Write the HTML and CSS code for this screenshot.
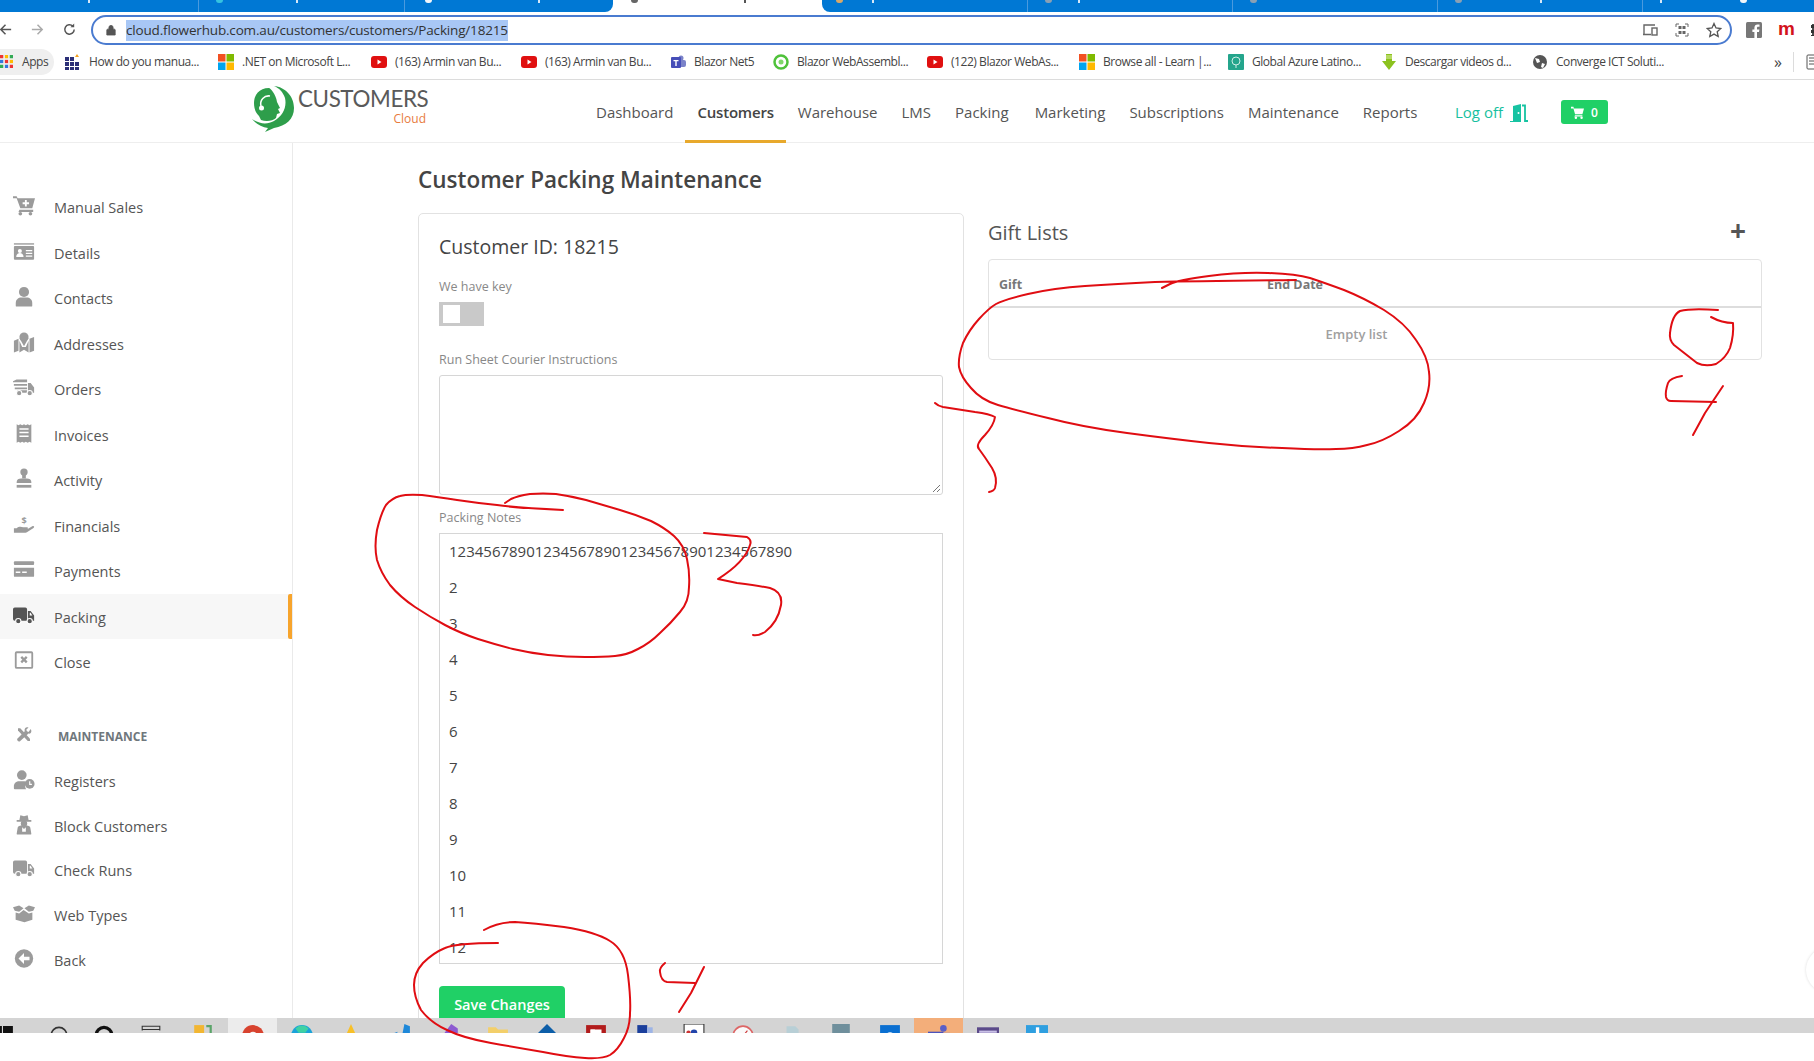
FILE: index.html
```html
<!DOCTYPE html>
<html lang="en">
<head>
<meta charset="utf-8">
<title>Customer Packing Maintenance</title>
<link rel="stylesheet" href="styles.css">
</head>
<body>
<div class="tabstrip">
  <div class="tab tab-first"><i class="tick"></i></div>
  <div class="tab tab-2"><i class="tabicon teal"></i><i class="tick m73"></i></div>
  <div class="tab tab-3"><i class="tabicon light"></i><i class="tick m106"></i></div>
  <div class="tab tab-active"><i class="tabicon dark"></i><i class="tick dark m106"></i></div>
  <div class="tab tab-5"><i class="tabicon amber"></i><i class="tick m29"></i></div>
  <div class="tab tab-n"><i class="tabicon grey"></i><i class="tick m26"></i></div>
  <div class="tab tab-n"><i class="tabicon grey"></i></div>
  <div class="tab tab-n"><i class="tabicon grey"></i><i class="tick m78"></i></div>
  <div class="tab tab-last"><i class="tick"></i><i class="tabicon light m78"></i></div>
</div>
<div class="toolbar">
  <svg class="tb-ic" viewBox="0 0 16 16"><path d="M14 8H3M8 3L3 8l5 5" fill="none" stroke="#555" stroke-width="1.6"/></svg>
  <svg class="tb-ic" viewBox="0 0 16 16"><path d="M2 8h11M8 3l5 5-5 5" fill="none" stroke="#aaa" stroke-width="1.6"/></svg>
  <svg class="tb-ic" viewBox="0 0 16 16"><path d="M13 8a5 5 0 1 1-1.5-3.6" fill="none" stroke="#555" stroke-width="1.6"/><path d="M13 1.500v4h-4z" fill="#555"/></svg>
  <div class="omnibox">
    <svg class="lock" viewBox="0 0 12 14"><path d="M2 6h8a1 1 0 0 1 1 1v6H1V7a1 1 0 0 1 1-1zM3.500 6V4a2.500 2.500 0 0 1 5 0v2" fill="#555" stroke="#555"/></svg>
    <span class="url">cloud.flowerhub.com.au/customers/customers/Packing/18215</span>
    <span class="grow"></span>
    <svg class="om-ic" viewBox="0 0 16 16"><path d="M2 12V3h11M1 12.500h8" fill="none" stroke="#666" stroke-width="1.400"/><rect x="10" y="6" width="5" height="7" fill="none" stroke="#666" stroke-width="1.400"/></svg>
    <svg class="om-ic" viewBox="0 0 16 16"><path d="M2 2h3M11 2h3M2 14h3M11 14h3M2 2v3M14 2v3M2 11v3M14 11v3" stroke="#666" fill="none"/><rect x="4.500" y="4" width="3" height="3" fill="#666"/><rect x="8.500" y="4" width="3" height="3" fill="#666"/><rect x="4.500" y="9" width="3" height="3" fill="#666"/><rect x="8.500" y="9" width="3" height="3" fill="#666"/></svg>
    <svg class="om-ic" viewBox="0 0 16 16"><path d="M8 1.500l2 4.500 4.800.5-3.600 3.200 1 4.800L8 12.100l-4.200 2.400 1-4.800L1.200 6.500 6 6z" fill="none" stroke="#555" stroke-width="1.300"/></svg>
  </div>
  <svg class="ext-f" viewBox="0 0 16 16"><rect width="16" height="16" rx="1.500" fill="#777"/><path d="M11 16v-6h2l.4-2.500H11V6c0-.7.300-1.200 1.200-1.200h1.300V2.600C13 2.500 12.300 2.400 11.600 2.400 9.700 2.400 8.400 3.600 8.400 5.700v1.800h-2V10h2v6z" fill="#fff"/></svg>
  <span class="ext-m">m</span>
  <span class="ext-dots"></span>
</div>
<div class="bookmarks">
  <div class="bm bm-apps"><svg class="bm-ic" viewBox="0 0 12 12"><rect x="0" y="0" width="3" height="3" fill="#e33"/><rect x="4.500" y="0" width="3" height="3" fill="#fb0"/><rect x="9" y="0" width="3" height="3" fill="#3a5"/><rect x="0" y="4.500" width="3" height="3" fill="#37d"/><rect x="4.500" y="4.500" width="3" height="3" fill="#e33"/><rect x="9" y="4.500" width="3" height="3" fill="#fb0"/><rect x="0" y="9" width="3" height="3" fill="#3a5"/><rect x="4.500" y="9" width="3" height="3" fill="#37d"/><rect x="9" y="9" width="3" height="3" fill="#e33"/></svg><span>Apps</span></div>
  <div class="bm w153"><svg class="bm-ic" viewBox="0 0 16 16"><g fill="#2b2f77"><rect x="0" y="3" width="4" height="4"/><rect x="5" y="3" width="4" height="4"/><rect x="0" y="8" width="4" height="4"/><rect x="5" y="8" width="4" height="4"/><rect x="10" y="8" width="4" height="4"/><rect x="0" y="13" width="4" height="3"/><rect x="5" y="13" width="4" height="3"/><rect x="10" y="13" width="4" height="3"/></g><path d="M12 0l2 3h-4z" fill="#f4a11f"/></svg><span>How do you manua...</span></div>
  <div class="bm w153"><svg class="bm-ic" viewBox="0 0 16 16"><rect width="7.500" height="7.500" fill="#f25022"/><rect x="8.500" width="7.500" height="7.500" fill="#7fba00"/><rect y="8.500" width="7.500" height="7.500" fill="#00a4ef"/><rect x="8.500" y="8.500" width="7.500" height="7.500" fill="#ffb900"/></svg><span>.NET on Microsoft L...</span></div>
  <div class="bm w150"><svg class="bm-ic" viewBox="0 0 16 16"><rect y="2" width="16" height="12" rx="3" fill="#e01010"/><path d="M6.500 5.500l4 2.500-4 2.500z" fill="#fff"/></svg><span>(163) Armin van Bu...</span></div>
  <div class="bm w149"><svg class="bm-ic" viewBox="0 0 16 16"><rect y="2" width="16" height="12" rx="3" fill="#e01010"/><path d="M6.500 5.500l4 2.500-4 2.500z" fill="#fff"/></svg><span>(163) Armin van Bu...</span></div>
  <div class="bm w103"><svg class="bm-ic" viewBox="0 0 16 16"><circle cx="11" cy="4" r="2.500" fill="#7b83c9"/><rect x="8" y="6" width="8" height="7" rx="2" fill="#7b83c9"/><rect x="1" y="3" width="10" height="11" rx="1" fill="#464eb8"/><path d="M3.500 6h5v1.300H6.700V12H5.300V7.300H3.500z" fill="#fff"/></svg><span>Blazor Net5</span></div>
  <div class="bm w154"><svg class="bm-ic" viewBox="0 0 16 16"><circle cx="8" cy="8" r="6.500" fill="none" stroke="#4fc23a" stroke-width="2.500"/><circle cx="8" cy="8" r="2.500" fill="#7fd86a"/></svg><span>Blazor WebAssembl...</span></div>
  <div class="bm w152"><svg class="bm-ic" viewBox="0 0 16 16"><rect y="2" width="16" height="12" rx="3" fill="#e01010"/><path d="M6.500 5.500l4 2.500-4 2.500z" fill="#fff"/></svg><span>(122) Blazor WebAs...</span></div>
  <div class="bm w149"><svg class="bm-ic" viewBox="0 0 16 16"><rect width="7.500" height="7.500" fill="#f25022"/><rect x="8.500" width="7.500" height="7.500" fill="#7fba00"/><rect y="8.500" width="7.500" height="7.500" fill="#00a4ef"/><rect x="8.500" y="8.500" width="7.500" height="7.500" fill="#ffb900"/></svg><span>Browse all - Learn |...</span></div>
  <div class="bm w153"><svg class="bm-ic" viewBox="0 0 16 16"><rect width="16" height="16" rx="1" fill="#24a58c"/><circle cx="8" cy="7" r="4" fill="none" stroke="#cfeee6"/><path d="M8 11v3" stroke="#cfeee6"/></svg><span>Global Azure Latino...</span></div>
  <div class="bm w151"><svg class="bm-ic" viewBox="0 0 16 16"><path d="M5 0h6v7h4l-7 9-7-9h4z" fill="#8cc21f"/><path d="M5 2h6M5 4h6" stroke="#dff0a8"/></svg><span>Descargar videos d...</span></div>
  <div class="bm"><svg class="bm-ic" viewBox="0 0 16 16"><circle cx="8" cy="8" r="7" fill="#555"/><path d="M3 4l4 1 1 3-3 1zM10 9l3 1-2 4-2-1z" fill="#fff"/></svg><span>Converge ICT Soluti...</span></div>
  <span class="grow"></span>
  <span class="bm-more">»</span>
  <span class="bm-sep"></span>
  <svg class="bm-list" viewBox="0 0 16 16"><rect x="1" y="1" width="14" height="14" rx="1" fill="none" stroke="#555"/><path d="M3 4h10M3 7h10M3 10h10" stroke="#555"/></svg>
</div>
<header class="appbar">
  <div class="logo">
    <svg class="logo-ic" viewBox="0 0 42 46" preserveAspectRatio="none">
      <path d="M22 0C33 1 42 10 42 22c0 11-8 18-20 20l-9 4 3-4C10 41 4 38 0 33c7 5 15 6 22 2 9-5 13-14 11-23-2-6-6-10-11-12z" fill="#2e9e4b"/>
      <path d="M17 2C7 2 2 9 2 17c0 6 2 10 5 13l2 4c5 2 12 1 15-2l1-4 3-1-2-4 2-1-3-6c-1-8-7-14-8-14z" fill="#2e9e4b"/>
      <path d="M9 20a8 8 0 0 1 9-10" fill="none" stroke="#fff" stroke-width="1.500"/>
      <circle cx="9.500" cy="22" r="2.500" fill="#fff"/>
    </svg>
    <div class="logo-text"><span class="logo-main">CUSTOMERS</span><span class="logo-sub">Cloud</span></div>
  </div>
  <nav class="mainnav">
    <a class="nav-item">Dashboard</a>
    <a class="nav-item active">Customers</a>
    <a class="nav-item">Warehouse</a>
    <a class="nav-item">LMS</a>
    <a class="nav-item">Packing</a>
    <a class="nav-item nudge">Marketing</a>
    <a class="nav-item">Subscriptions</a>
    <a class="nav-item">Maintenance</a>
    <a class="nav-item">Reports</a>
  </nav>
  <a class="logoff">Log off
    <svg class="door" viewBox="0 0 20 18"><path d="M1 17h3V2l8-2v18H1z" fill="#17c3a2"/><path d="M13 1.500h3V17h3" fill="none" stroke="#17c3a2" stroke-width="1.800"/><circle cx="9.500" cy="9" r="1" fill="#fff"/></svg>
  </a>
  <a class="cart-btn">
    <svg class="cart-ic" viewBox="0 0 16 16"><path d="M0 1h3l.6 2H16l-2 7H5L3 3H0zM5 11.500h9V13H4z" fill="#fff"/><circle cx="6" cy="14.500" r="1.500" fill="#fff"/><circle cx="13" cy="14.500" r="1.500" fill="#fff"/></svg>
    <span>0</span>
  </a>
</header>
<div class="workspace">
  <aside class="sidebar">
    <ul class="side-list">
      <li class="side-item"><svg class="side-ic" viewBox="0 0 24 22"><path d="M0 1h4l1 2h19l-3 11H8L4 3H0z"/><path d="M7 15.500h15V18H6z"/><circle cx="8" cy="20" r="2"/><circle cx="19" cy="20" r="2"/><path d="M13 5h2v2.500h2.500v2H15V12h-2V9.500h-2.500v-2H13z" fill="#fff"/></svg><span>Manual Sales</span></li>
      <li class="side-item"><svg class="side-ic" viewBox="0 0 24 20"><rect x="1" y="1" width="22" height="1.500"/><rect x="1" y="4" width="22" height="15" rx="1"/><circle cx="7.500" cy="9.500" r="2.200" fill="#fff"/><path d="M3.500 16c0-6 8-6 8 0z" fill="#fff"/><path d="M14 9h7M14 12h7M14 15h7" stroke="#fff" stroke-width="1.200"/></svg><span>Details</span></li>
      <li class="side-item"><svg class="side-ic" viewBox="0 0 24 22"><circle cx="12" cy="6" r="5.500"/><path d="M3 21v-3c0-4 3-6 6-6h6c3 0 6 2 6 6v3a1 1 0 0 1-1 1H4a1 1 0 0 1-1-1z"/></svg><span>Contacts</span></li>
      <li class="side-item"><svg class="side-ic" viewBox="0 0 24 22"><path d="M1 9l5-2v13l-5 2zM7 9l3 7h4l3-7v13l-5-3-5 3zM18 7l5-2v15l-5 2z"/><circle cx="12" cy="5" r="5"/><path d="M7 6l5 9 5-9z"/></svg><span>Addresses</span></li>
      <li class="side-item"><svg class="side-ic" viewBox="0 0 25 20"><path d="M4 1h12v3H0V3zM1 6h15v2H1zM2 10h14v2H2zM5 13h11v3H5zM17 5h3l4 5v6h-7z"/><circle cx="7" cy="16.500" r="3" stroke="#fff"/><circle cx="19" cy="16.500" r="3" stroke="#fff"/></svg><span>Orders</span></li>
      <li class="side-item"><svg class="side-ic" viewBox="0 0 24 22"><path d="M4 1l2 1 2-1 2 1 2-1 2 1 2-1 2 1 2-1v20l-2-1-2 1-2-1-2 1-2-1-2 1-2-1-2 1z"/><path d="M7 6h10M7 10h10M7 14h10" stroke="#fff" stroke-width="1.600"/></svg><span>Invoices</span></li>
      <li class="side-item"><svg class="side-ic" viewBox="0 0 24 22"><circle cx="12" cy="4" r="4"/><path d="M10 6h4v5h-4z"/><path d="M4 15c0-3 2-4 5-4h6c3 0 5 1 5 4v1H4z"/><rect x="4" y="18" width="16" height="3"/></svg><span>Activity</span></li>
      <li class="side-item"><svg class="side-ic" viewBox="0 0 24 22"><text x="12" y="11" class="side-usd">$</text><path d="M1 15h3c2-2 5-2 7-1h4c2 0 2 2 0 2h-4 5l5-3c2-1 3 1 1 2l-6 4c-1 1-2 1-3 1H1z"/></svg><span>Financials</span></li>
      <li class="side-item"><svg class="side-ic" viewBox="0 0 24 20"><rect x="1" y="1" width="22" height="4" rx="1"/><path d="M1 8h22v9a1 1 0 0 1-1 1H2a1 1 0 0 1-1-1z"/><path d="M3 13h5M10 13h5" stroke="#fff" stroke-width="1.500"/></svg><span>Payments</span></li>
      <li class="side-item current"><svg class="side-ic" viewBox="0 0 25 20"><path d="M2 1h12a2 2 0 0 1 2 2v13H2a2 2 0 0 1-2-2V3a2 2 0 0 1 2-2zM17 5h3l4 5v6h-7z"/><path d="M19 7h1l2 3h-3z" fill="#fff"/><circle cx="6" cy="16.500" r="3" stroke="#fff"/><circle cx="19" cy="16.500" r="3" stroke="#fff"/></svg><span>Packing</span></li>
      <li class="side-item"><svg class="side-ic" viewBox="0 0 24 22"><rect x="3" y="2" width="18" height="17" rx="1" fill="none" stroke-width="2"/><path d="M9 7l6 6M15 7l-6 6" stroke-width="2.500" fill="none"/></svg><span>Close</span></li>
    </ul>
    <div class="side-head"><svg class="side-ic" viewBox="0 0 24 22"><path d="M4 2l3 0 13 14 0 3-3 0L4 5z"/><path d="M21 3l-3 4-2-1-1-2 3-3c-4-1-6 2-5 5L3 16c-1 2 2 5 4 3L18 9c3 1 5-2 3-6z"/></svg><span>MAINTENANCE</span></div>
    <ul class="side-list">
      <li class="side-item tight"><svg class="side-ic" viewBox="0 0 25 22"><circle cx="10" cy="6" r="5.500"/><path d="M1 21v-2c0-4 3-6 6-6h6c1 0 2 .3 3 1-2 2-3 5-1 8H2a1 1 0 0 1-1-1z"/><circle cx="19" cy="16" r="5.500"/><path d="M19 13v3.500h2.500" stroke="#fff" stroke-width="1.300" fill="none"/></svg><span>Registers</span></li>
      <li class="side-item tight"><svg class="side-ic" viewBox="0 0 24 22"><path d="M8 1l4 1 4-1 1 5h3v2H4V6h3z"/><circle cx="12" cy="10" r="3.500"/><path d="M4 21l1-6c0-2 2-3 4-3h6c2 0 4 1 4 3l1 6a1 1 0 0 1-1 1H5a1 1 0 0 1-1-1z"/><path d="M10 14l2 2 2-2v5h-4z" fill="#fff"/></svg><span>Block Customers</span></li>
      <li class="side-item tight"><svg class="side-ic" viewBox="0 0 25 20"><path d="M2 1h12a2 2 0 0 1 2 2v13H2a2 2 0 0 1-2-2V3a2 2 0 0 1 2-2zM17 5h3l4 5v6h-7z"/><path d="M19 7h1l2 3h-3z" fill="#fff"/><circle cx="6" cy="16.500" r="3" stroke="#fff"/><circle cx="19" cy="16.500" r="3" stroke="#fff"/></svg><span>Check Runs</span></li>
      <li class="side-item tight"><svg class="side-ic" viewBox="0 0 25 20"><path d="M0 3l7-2 5 3-5 4-5-1zM25 3l-7-2-5 3 5 4 5-1z"/><path d="M3 9l4 1 5-4 6 4 4-1v8l-9 3-10-3z"/></svg><span>Web Types</span></li>
      <li class="side-item tight"><svg class="side-ic" viewBox="0 0 24 22"><circle cx="12" cy="11" r="10"/><path d="M12 5l-6 6 6 6v-4h6V9h-6z" fill="#fff"/></svg><span>Back</span></li>
    </ul>
  </aside>
  <main class="content">
    <section class="left-col">
      <h1 class="page-title">Customer Packing Maintenance</h1>
      <div class="card">
        <h2 class="card-title">Customer ID: 18215</h2>
        <label class="field-label first">We have key</label>
        <div class="toggle"><span class="knob"></span></div>
        <label class="field-label second">Run Sheet Courier Instructions</label>
        <div class="textbox"><svg class="grip" viewBox="0 0 10 10"><path d="M9 2L2 9M9 6L6 9" stroke="#777" fill="none"/></svg></div>
        <label class="field-label third">Packing Notes</label>
        <div class="notes">
          <div>1234567890123456789012345678901234567890</div>
          <div>2</div><div>3</div><div>4</div><div>5</div><div>6</div><div>7</div><div>8</div><div>9</div><div>10</div><div>11</div><div>12</div>
        </div>
        <button class="save-btn">Save Changes</button>
      </div>
    </section>
    <section class="right-col">
      <div class="gift-head"><h2 class="gift-title">Gift Lists</h2><span class="plus">+</span></div>
      <div class="gift-table">
        <div class="gift-row"><span class="col-gift">Gift</span><span>End Date</span></div>
        <div class="gift-empty">Empty list</div>
      </div>
    </section>
    <span class="edge-circle"></span>
  </main>
</div>
<div class="taskbar">
  <div class="task win"><svg class="task-ic" viewBox="0 0 20 20"><rect width="9" height="9" fill="#111"/><rect x="10" width="9" height="9" fill="#111"/></svg></div>
  <div class="task t47"><svg class="task-ic" viewBox="0 0 20 20"><circle cx="10" cy="10" r="7" fill="none" stroke="#333" stroke-width="1.500"/></svg></div>
  <div class="task t43"><svg class="task-ic" viewBox="0 0 20 20"><circle cx="10" cy="10" r="7" fill="none" stroke="#111" stroke-width="3"/></svg></div>
  <div class="task t52"><svg class="task-ic" viewBox="0 0 20 20"><path d="M2 6V2h16v4M2 5h16" fill="none" stroke="#333"/></svg></div>
  <div class="task t51"><svg class="task-ic" viewBox="0 0 20 20"><rect x="2" y="1" width="9" height="14" fill="#f2b632"/><path d="M13 1h5v8h-2V3h-3z" fill="#5aa469"/></svg></div>
  <div class="task lit"><svg class="task-ic" viewBox="0 0 20 20"><circle cx="10" cy="11" r="10" fill="#d8432f"/><circle cx="10" cy="11" r="4" fill="#f4f4f4"/></svg></div>
  <div class="task"><svg class="task-ic" viewBox="0 0 20 20"><circle cx="10" cy="11" r="10" fill="#1aa3d9"/><path d="M4 4a8 8 0 0 1 12 0l-3 4H7z" fill="#3fd1a3"/></svg></div>
  <div class="task"><svg class="task-ic" viewBox="0 0 20 20"><path d="M10 0l5 11H5z" fill="#f8c028"/><path d="M3 8l5 8H0z" fill="#e8553e"/><path d="M16 8l4 8h-8z" fill="#a557c7"/></svg></div>
  <div class="task"><svg class="task-ic" viewBox="0 0 20 20"><path d="M14 0l5 2v18H10zM0 10l8-3-6 10z" fill="#1e88d9"/></svg></div>
  <div class="task"><svg class="task-ic" viewBox="0 0 20 20"><path d="M12 0l6 4v12l-6 4-9-8z" fill="#8d5bd1"/><path d="M2 8l5 4-5 5z" fill="#b98ae8"/></svg></div>
  <div class="task"><svg class="task-ic" viewBox="0 0 20 20"><path d="M1 3h7l2 2h9v12H1z" fill="#f3cf6a"/></svg></div>
  <div class="task"><svg class="task-ic" viewBox="0 0 20 20"><path d="M10 0l10 10-10 10L0 10z" fill="#0d5ea8"/></svg></div>
  <div class="task"><svg class="task-ic" viewBox="0 0 20 20"><rect x="1" y="1" width="18" height="18" fill="#b21c1c"/><rect x="5" y="5" width="10" height="4" fill="#fff"/><rect x="5" y="5" width="4" height="10" fill="#fff"/></svg></div>
  <div class="task"><svg class="task-ic" viewBox="0 0 20 20"><rect x="3" y="1" width="9" height="18" fill="#1b3f9c"/><rect x="12" y="3" width="5" height="15" fill="#9db4e6"/></svg></div>
  <div class="task"><svg class="task-ic" viewBox="0 0 20 20"><rect x="1" y="0" width="18" height="19" fill="#fff" stroke="#333"/><circle cx="10" cy="8" r="3" fill="#2244aa"/><circle cx="5" cy="8" r="2" fill="#c33"/></svg></div>
  <div class="task"><svg class="task-ic" viewBox="0 0 20 20"><circle cx="10" cy="11" r="9" fill="#fafafa" stroke="#d66" stroke-width="1.500"/><path d="M10 11l4-5" stroke="#c33"/></svg></div>
  <div class="task"><svg class="task-ic" viewBox="0 0 20 20"><path d="M5 2h8l3 3v14H5z" fill="#b8cfd6"/></svg></div>
  <div class="task"><svg class="task-ic" viewBox="0 0 20 20"><rect x="2" y="0" width="16" height="10" fill="#6f8f9c"/><rect x="2" y="10" width="16" height="6" fill="#3a7ea8"/></svg></div>
  <div class="task"><svg class="task-ic" viewBox="0 0 20 20"><rect x="1" y="1" width="18" height="18" fill="#0a6fd1"/><circle cx="10" cy="11" r="3.500" fill="#fff"/></svg></div>
  <div class="task warm"><svg class="task-ic" viewBox="0 0 20 20"><circle cx="14" cy="4" r="3" fill="#5b5fc7"/><rect x="0" y="7" width="14" height="12" fill="#4b53bc"/><rect x="14" y="8" width="6" height="10" fill="#7b83d9"/></svg></div>
  <div class="task"><svg class="task-ic" viewBox="0 0 20 20"><rect x="0" y="3" width="20" height="15" fill="#5b4a8a"/><rect x="2" y="6" width="16" height="2" fill="#c9c0e6"/></svg></div>
  <div class="task"><svg class="task-ic" viewBox="0 0 20 20"><rect x="0" y="1" width="20" height="18" fill="#2f9fe0"/><rect x="9" y="3" width="3" height="9" fill="#fff"/></svg></div>
</div>
<div class="foot"></div>
<svg class="ink" viewBox="0 0 1814 1061" fill="none" stroke="#e00d12" stroke-width="2" stroke-linecap="round" stroke-linejoin="round">
  <path d="M1162 288L1170 284Q1178 280 1209 276Q1240 272 1268 273Q1296 274 1310 278Q1325 283 1344 290Q1364 298 1384 310Q1405 323 1416 340Q1428 357 1429 372Q1431 387 1424 403Q1417 420 1399 431Q1382 442 1367 445Q1353 449 1336 449Q1319 450 1282 448Q1246 447 1209 443Q1172 439 1127 433Q1082 427 1048 418Q1015 410 998 405Q981 400 971 388Q961 377 959 367Q958 357 963 343Q969 330 979 319Q989 308 996 304Q1003 300 1028 294Q1054 288 1085 286Q1116 284 1155 282Q1195 281 1296 280"/>
  <path d="M505 503L511 499Q517 496 530 494Q543 493 556 494Q570 496 586 500Q603 505 620 510Q637 515 651 521Q665 528 674 536Q684 545 687 559Q690 573 689 587Q689 602 680 612Q671 623 660 633Q650 643 638 649Q627 655 615 656Q603 657 585 657Q567 657 548 655Q530 653 513 649Q497 645 478 639Q460 633 445 625Q430 617 415 607Q400 597 390 585Q381 573 377 560Q374 547 377 530Q381 513 386 505Q392 498 400 496Q407 494 422 495Q437 497 457 500Q477 503 497 505Q517 508 563 510"/>
  <path d="M704 533L747 537Q752 540 750 545Q745 562 718 579L737 583Q760 586 770 588Q783 592 781 605Q778 622 765 632Q758 636 753 635"/>
  <path d="M935 403Q938 406 943 407L975 412Q990 414 995 417Q994 425 985 435Q975 445 979 449Q985 457 992 468Q998 478 995 488Q994 491 989 492"/>
  <path d="M1718 310Q1691 308 1680 311Q1672 315 1670 333Q1669 340 1674 345L1697 363Q1705 367 1716 364Q1726 358 1730 348Q1734 335 1733 323Q1722 323 1711 317"/>
  <path d="M1682 376Q1670 378 1668 383Q1665 392 1666 397Q1667 401 1671 401L1716 402"/>
  <path d="M1723 386L1705 413L1693 435"/>
  <path d="M484 930Q498 922 515 922Q533 923 564 927Q596 932 610 941Q625 950 628 975Q631 1000 630 1013Q630 1027 624 1038Q618 1050 610 1055Q603 1059 585 1058Q568 1057 543 1052Q519 1048 491 1043Q463 1038 447 1030Q431 1023 421 1010Q414 997 414 985Q414 973 423 963Q433 953 445 948Q456 943 498 943"/>
  <path d="M665 963Q659 968 660 972Q661 981 667 982L695 983"/>
  <path d="M704 967L691 993L679 1012"/>
</svg>
</body>
</html>
```
FILE: styles.css
```css
* { box-sizing: border-box; }
html, body { margin: 0; padding: 0; }
body {
  width: 1814px;
  height: 1061px;
  overflow: hidden;
  position: relative;
  background: #fff;
  font-family: "Open Sans", "Liberation Sans", sans-serif;
  color: #555;
  display: flex;
  flex-direction: column;
}
.grow { flex: 1; }

/* browser chrome */
.tabstrip {
  height: 12px;
  background: #fff;
  display: flex;
  overflow: hidden;
  flex: none;
}
.tab {
  width: 205px;
  height: 12px;
  display: flex;
  align-items: flex-start;
  background: #0078d4;
  box-shadow: inset -1px 0 0 #4a9ade;
  flex: none;
}
.tab-first { width: 199px; padding-left: 88px; }
.tab-2 { width: 206px; padding-left: 17px; }
.tab-3 { width: 208px; padding-left: 20px; border-radius: 0 0 8px 0; box-shadow: none; }
.tab-active { width: 209px; padding-left: 18px; background: #fff; box-shadow: none; }
.tab-5 { width: 206px; padding-left: 14px; border-radius: 0 0 0 8px; }
.tab-n { padding-left: 17px; }
.tab-last { width: 171px; padding-left: 17px; box-shadow: none; }
.tick { width: 2px; height: 3px; background: #d6e8f8; flex: none; }
.tick.dark { background: #555; }
.tabicon { width: 7px; height: 3px; border-radius: 0 0 4px 4px; background: #d6e8f8; flex: none; }
.tabicon.teal { background: #35c3e0; }
.tabicon.light { background: #f2f6fa; }
.tabicon.dark { background: #666; }
.tabicon.grey { background: #8aa0b4; }
.tabicon.amber { background: #d8a868; }
.m26 { margin-left: 26px; }
.m29 { margin-left: 29px; }
.m73 { margin-left: 73px; }
.m78 { margin-left: 78px; }
.m106 { margin-left: 106px; }

.toolbar {
  height: 36px;
  display: flex;
  align-items: flex-start;
  background: #fff;
  flex: none;
  padding-top: 3px;
}
.tb-ic { width: 15px; height: 15px; margin-right: 17px; margin-top: 7px; flex: none; }
.tb-ic:first-child { margin-left: -2px; }
.omnibox {
  width: 1641px;
  height: 30px;
  margin-left: -3px;
  border: 2px solid #4a7bd0;
  border-radius: 15px;
  display: flex;
  align-items: center;
  padding-left: 13px;
  padding-right: 8px;
  flex: none;
}
.lock { width: 10px; height: 12px; margin-right: 10px; flex: none; }
.url {
  font-size: 13.500px;
  line-height: 21px;
  background: #a8c7f5;
  color: #333;
  letter-spacing: -0.17px;
  white-space: nowrap;
}
.om-ic { width: 16px; height: 16px; margin-left: 16px; flex: none; }
.ext-f { width: 16px; height: 16px; margin-left: 14px; margin-top: 7px; flex: none; }
.ext-m { font-family: "Liberation Sans", sans-serif; font-weight: 700; font-size: 19px; line-height: 20px; color: #d3121c; margin-left: 16px; margin-top: 4px; flex: none; }
.ext-dots { width: 4px; height: 12px; margin-left: 16px; margin-top: 9px; background: radial-gradient(circle, #333 2px, transparent 2.500px) 0 0 / 4px 5px repeat-y; flex: none; }

.bookmarks {
  height: 32px;
  display: flex;
  align-items: center;
  padding-bottom: 4px;
  border-bottom: 1px solid #dcdcdc;
  background: #fff;
  flex: none;
  font-size: 12px;
  color: #444;
  white-space: nowrap;
}
.bm { display: flex; align-items: center; gap: 8px; flex: none; letter-spacing: -0.45px; overflow: hidden; }
.bm-apps {
  width: 65px;
  height: 26px;
  gap: 9px;
  padding-right: 5px;
  position: relative;
}
.bm-apps::before {
  content: "";
  position: absolute;
  left: 0; top: 0; width: 54px; height: 26px;
  background: #efefef;
  border-radius: 0 13px 13px 0;
  z-index: 0;
}
.bm-apps svg, .bm-apps span { position: relative; z-index: 1; }
.bm-apps .bm-ic { width: 13px; height: 13px; }
.bm-ic { width: 16px; height: 16px; flex: none; }
.w153 { width: 153px; }
.w150 { width: 150px; }
.w149 { width: 149px; }
.w103 { width: 103px; }
.w154 { width: 154px; }
.w152 { width: 152px; }
.w151 { width: 151px; }
.bm-more { font-size: 16px; color: #444; margin-right: 11px; }
.bm-sep { width: 1px; height: 20px; background: #dcdcdc; margin-right: 12px; }
.bm-list { width: 16px; height: 16px; margin-right: -8px; flex: none; }

/* app header */
.appbar {
  height: 63px;
  flex: none;
  display: flex;
  align-items: stretch;
  border-bottom: 1px solid #eee;
  padding-left: 252px;
  background: #fff;
}
.logo { width: 344px; display: flex; align-items: flex-start; gap: 4px; padding-top: 6px; flex: none; }
.logo-ic { width: 42px; height: 46px; flex: none; }
.logo-text { display: flex; flex-direction: column; width: 131px; align-items: stretch; }
.logo-main {
  font-family: Lato, "Open Sans", sans-serif;
  font-weight: 400;
  font-size: 22.400px;
  line-height: 26px;
  color: #5a5a5a;
  letter-spacing: -0.4px;
  white-space: nowrap;
}
.logo-sub { font-size: 12px; line-height: 14px; color: #e87b3e; text-align: right; padding-right: 3px; margin-top: 0; }
.mainnav { display: flex; width: 859px; flex: none; }
.nav-item {
  font-size: 15px;
  line-height: 20px;
  padding: 22px 12px 0;
  color: #555;
  white-space: nowrap;
  height: 63px;
  border-bottom: 3px solid transparent;
}
.nav-item:first-child { padding-left: 0; }
.nav-item.active { font-weight: 600; color: #444; border-bottom-color: #e8a92c; letter-spacing: -0.2px; }
.nav-item.nudge { padding-left: 14px; }
.logoff {
  font-size: 15px;
  line-height: 20px;
  color: #17bfa0;
  display: flex;
  align-items: flex-start;
  gap: 6px;
  padding-top: 22px;
  width: 106px;
  flex: none;
  white-space: nowrap;
}
.door { width: 20px; height: 18px; margin-top: 2px; flex: none; }
.cart-btn {
  width: 47px;
  height: 24px;
  margin-top: 20px;
  background: #20d066;
  border-radius: 3px;
  display: flex;
  align-items: center;
  justify-content: center;
  gap: 7px;
  color: #fff;
  font-size: 12px;
  font-weight: 600;
  flex: none;
}
.cart-ic { width: 13px; height: 13px; }

/* workspace */
.workspace {
  flex: none;
  height: 875px;
  display: flex;
  overflow: hidden;
  background: #fff;
}
.sidebar {
  width: 293px;
  flex: none;
  border-right: 1px solid #eaeaea;
  padding-top: 41px;
}
.side-list { list-style: none; margin: 0; padding: 0; }
.side-item {
  height: 45.500px;
  display: flex;
  align-items: center;
  gap: 19px;
  padding-left: 13px;
  font-size: 14.500px;
  color: #555;
  position: relative;
}
.side-item.tight { height: 44.800px; }
.side-item span { position: relative; top: 1px; }
.side-ic { width: 22px; height: 21px; fill: #9b9b9b; stroke: #9b9b9b; stroke-width: 0; flex: none; position: relative; top: -1px; }
.side-usd { font-size: 10px; font-weight: 700; text-anchor: middle; font-family: "Open Sans", sans-serif; }
.side-item.current { background: #f7f7f7; }
.side-item.current::after {
  content: "";
  position: absolute;
  right: 0; top: 0; bottom: 0;
  width: 4px;
  background: #f7a42c;
  border-radius: 2px 0 0 2px;
}
.side-item.current .side-ic { fill: #555; stroke: #555; }
.side-ic circle[stroke="#fff"] { stroke: #fff; stroke-width: 1.200; }
.side-ic path[stroke="#fff"] { stroke: #fff; }
.side-ic path[stroke-width], .side-ic rect[stroke-width] { stroke: #9b9b9b; }
.side-ic path[stroke="#fff"][stroke-width] { stroke: #fff; }
.side-head {
  display: flex;
  align-items: center;
  gap: 27px;
  padding-left: 13px;
  margin-top: 29.500px;
  height: 44px;
  font-size: 12px;
  font-weight: 700;
  color: #6f777c;
}
.side-head .side-ic { width: 18px; height: 18px; margin-left: 2px; margin-right: -2px; }

.content {
  flex: 1;
  display: flex;
  align-items: flex-start;
  padding-left: 125px;
  position: relative;
}
.left-col { width: 546px; flex: none; }
.page-title {
  margin: 19px 0 15px;
  font-size: 22.500px;
  line-height: 36px;
  font-weight: 600;
  color: #444;
  white-space: nowrap;
}
.card {
  width: 546px;
  height: 900px;
  border: 1px solid #e2e2e2;
  border-radius: 5px;
  padding: 19px 20px 20px;
}
.card-title {
  margin: 0;
  font-size: 19.500px;
  line-height: 28px;
  font-weight: 500;
  color: #444;
}
.field-label {
  display: block;
  font-size: 12.500px;
  line-height: 18px;
  font-weight: 500;
  color: #888;
}
.field-label.first { margin-top: 17px; }
.toggle {
  width: 45px;
  height: 24px;
  margin-top: 6px;
  background: #c9c9c9;
  padding: 3px 4px;
}
.knob { display: block; width: 17px; height: 18px; background: #fff; }
.field-label.second { margin-top: 25px; }
.textbox {
  width: 504px;
  height: 120px;
  margin-top: 6px;
  border: 1px solid #d6d6d6;
  border-radius: 3px;
  position: relative;
}
.grip { position: absolute; right: 1px; bottom: 1px; width: 10px; height: 10px; }
.field-label.third { margin-top: 14px; }
.notes {
  width: 504px;
  height: 431px;
  margin-top: 6px;
  border: 1px solid #d6d6d6;
  padding: 0 9px;
  overflow: hidden;
  font-size: 15px;
  line-height: 36px;
  color: #444;
}
.notes div:first-child { margin-top: -1px; }
.save-btn {
  display: block;
  width: 126px;
  height: 36px;
  margin-top: 22px;
  border: 0;
  border-radius: 4px;
  background: #20d066;
  color: #fff;
  font-family: "Open Sans", sans-serif;
  font-size: 14.500px;
  font-weight: 600;
  padding: 0;
}
.right-col { width: 774px; margin-left: 24px; flex: none; }
.gift-head {
  display: flex;
  justify-content: space-between;
  align-items: flex-start;
  margin-top: 72px;
  height: 44px;
}
.gift-title { margin: 0; font-size: 20px; line-height: 36px; font-weight: 500; color: #555; }
.plus { font-size: 28px; line-height: 36px; font-weight: 700; color: #555; margin-right: 16px; margin-top: -3px; }
.gift-table { border: 1px solid #e2e2e2; border-radius: 4px; height: 101px; }
.gift-row {
  height: 48px;
  border-bottom: 2px solid #ddd;
  display: flex;
  padding: 16px 0 0 10px;
  font-size: 12.500px;
  line-height: 18px;
  font-weight: 700;
  color: #777;
}
.col-gift { width: 268px; }
.gift-empty {
  text-align: center;
  font-size: 13px;
  line-height: 18px;
  font-weight: 600;
  color: #a0a0a0;
  padding-top: 17px;
  padding-right: 37px;
}
.edge-circle {
  position: absolute;
  left: 1513px;
  top: 804px;
  width: 46px;
  height: 46px;
  border-radius: 50%;
  background: #fff;
  box-shadow: 0 0 3px rgba(0,0,0,.14);
}

/* taskbar */
.taskbar {
  height: 15px;
  background: #d4d4d4;
  flex: none;
  display: flex;
  overflow: hidden;
}
.task { width: 49px; flex: none; height: 15px; display: flex; justify-content: center; padding-top: 6px; overflow: hidden; }
.task.win { justify-content: flex-start; padding-top: 8px; margin-left: -8px; width: 43px; }
.task.t47 { width: 47px; }
.task.t43 { width: 43px; }
.task.t52 { width: 52px; }
.task.t51 { width: 51px; }
.task.lit { background: #ececec; }
.task.warm { background: #f3ae7a; }
.task-ic { width: 22px; height: 22px; flex: none; }
.foot { flex: 1; background: #fff; }

/* hand-drawn review marks over the screenshot */
.ink {
  position: absolute;
  left: 0; top: 0;
  width: 1814px;
  height: 1061px;
  pointer-events: none;
}
```
